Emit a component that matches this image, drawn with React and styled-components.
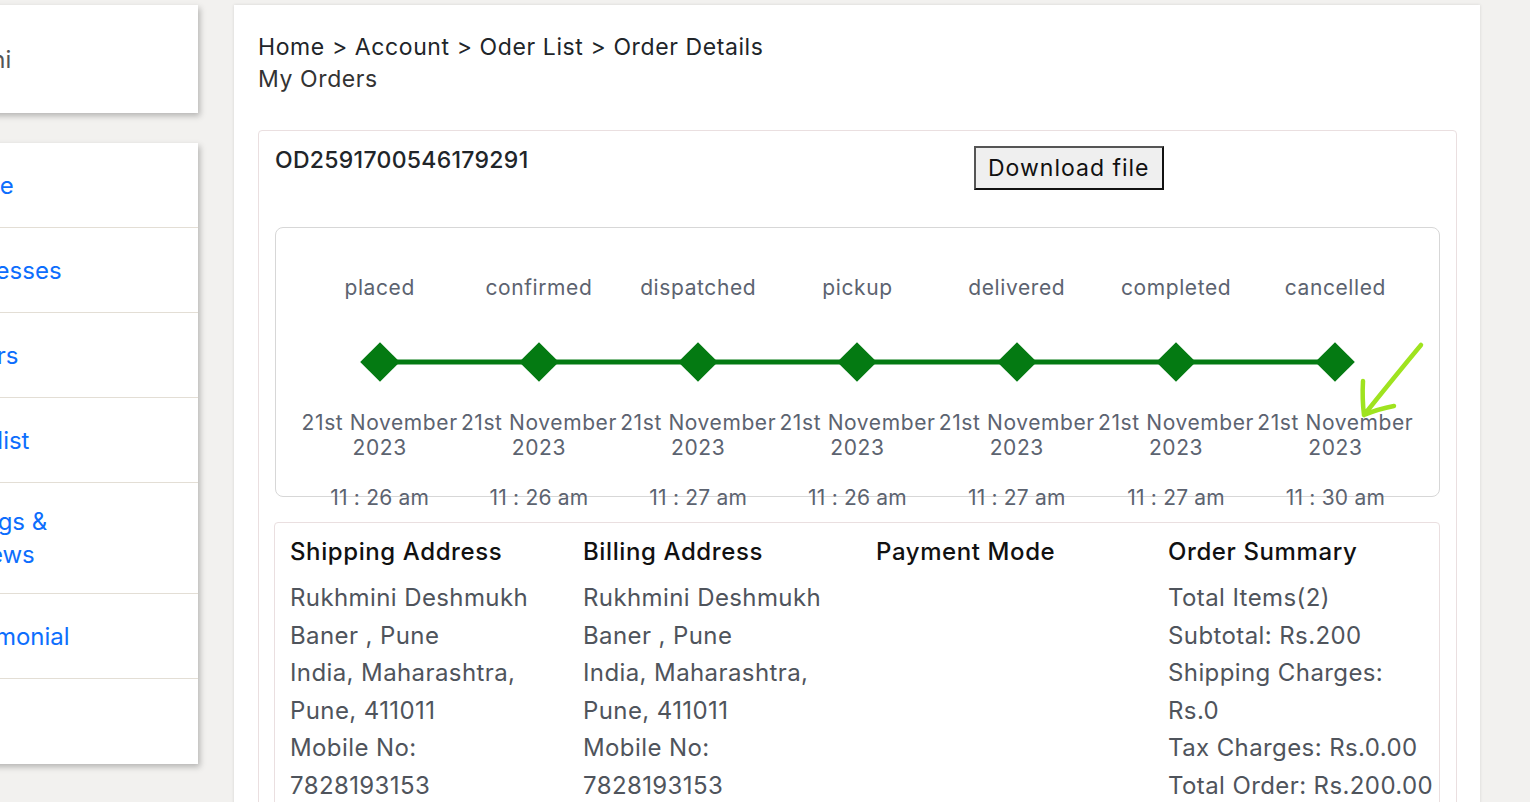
import React from "react";
import styled, { createGlobalStyle } from "styled-components";

const GlobalStyle = createGlobalStyle`
  html, body {
    margin: 0;
    padding: 0;
    overflow: hidden;
    background: #f2f1ef;
  }
  body {
    font-family: "Inter", "Open Sans", sans-serif;
    color: #212529;
  }
  * { box-sizing: border-box; }
`;

const Page = styled.div`
  display: flex;
  align-items: flex-start;
  gap: 36px;
  padding-top: 5px;
  height: 802px;
`;

const Sidebar = styled.aside`
  flex: 0 0 337px;
  margin-left: -139px;
  display: flex;
  flex-direction: column;
  gap: 30px;
`;

const SideCard = styled.div`
  background: #fff;
  box-shadow: 2px 3px 6px rgba(0, 0, 0, 0.25);
`;

const Greeting = styled.div`
  height: 108px;
  display: flex;
  align-items: center;
  padding: 0 16px;
  font-size: 24px;
  color: #555;
`;

const NavItem = styled.a`
  display: flex;
  align-items: center;
  min-height: 85px;
  padding: 22px 100px 22px 80px;
  line-height: 33px;
  font-size: 24px;
  color: #0d6efd;
  text-decoration: none;
  border-bottom: 1px solid #e3ded5;
  &:last-child { border-bottom: 0; }
`;

const Main = styled.main`
  flex: 0 0 1246px;
  min-height: 797px;
  background: #fff;
  padding: 26px 23px 0 24px;
  box-shadow: 0 0 3px rgba(0, 0, 0, 0.12);
`;

const Crumbs = styled.div`
  font-size: 23px;
  letter-spacing: 0.6px;
  line-height: 32px;
  color: #212529;
`;

const Title = styled.div`
  font-size: 23px;
  letter-spacing: 0.6px;
  line-height: 32px;
  color: #333;
`;

const OrderBox = styled.section`
  margin-top: 35px;
  border: 1px solid #eadfe0;
  border-radius: 4px;
  padding: 0 16px;
  height: 700px;
`;

const OrderHead = styled.div`
  display: grid;
  grid-template-columns: 60% 40%;
  padding-top: 14px;
  align-items: start;
`;

const OrderId = styled.div`
  font-size: 23px;
  letter-spacing: 0.3px;
  font-weight: 500;
  line-height: 30px;
  color: #212529;
`;

const DownloadButton = styled.button`
  justify-self: start;
  height: 44px;
  margin-top: 1px;
  padding: 0 12px;
  font-family: inherit;
  font-size: 23px;
  letter-spacing: 1px;
  color: #111;
  background: #efefef;
  border: 2px solid;
  border-color: #555 #111 #111 #555;
`;

const Track = styled.div`
  position: relative;
  margin-top: 37px;
  height: 270px;
  border: 1px solid #d7d7d7;
  border-radius: 8px;
  padding: 48px 24px 0;
  display: grid;
  grid-template-columns: repeat(7, 1fr);
`;

const Step = styled.div`
  display: flex;
  flex-direction: column;
  align-items: center;
  color: #5c6370;
  font-size: 21px;
  letter-spacing: 0.6px;
  text-align: center;
`;

const StepLabel = styled.div`
  line-height: 24px;
`;

const Marker = styled.div`
  position: relative;
  width: 100%;
  height: 40px;
  margin-top: 42px;
  display: flex;
  justify-content: center;
  align-items: center;

  &::before {
    content: "";
    position: absolute;
    top: 50%;
    height: 5px;
    transform: translateY(-50%);
    left: ${(p) => (p.$first ? "50%" : "0")};
    right: ${(p) => (p.$last ? "50%" : "0")};
    background: #047a12;
  }
`;

const Diamond = styled.span`
  position: relative;
  width: 28px;
  height: 28px;
  background: #047a12;
  transform: rotate(45deg);
`;

const StepDate = styled.div`
  margin-top: 28px;
  line-height: 25px;
  white-space: nowrap;
`;

const StepTime = styled.div`
  margin-top: 25px;
  line-height: 25px;
  letter-spacing: 0.2px;
`;

const Scribble = styled.svg`
  position: absolute;
  left: 1080px;
  top: 111px;
  width: 70px;
  height: 85px;
  overflow: visible;
`;

const InfoGrid = styled.div`
  margin-top: 25px;
  margin-left: -1px;
  border: 1px solid #eadfe0;
  border-radius: 4px;
  display: grid;
  grid-template-columns: 293px 293px 292px 1fr;
  padding-top: 13px;
  min-height: 300px;
`;

const InfoCol = styled.div`
  padding: 0 4px 0 15px;
`;

const InfoHead = styled.div`
  font-size: 24px;
  letter-spacing: 0.6px;
  font-weight: 500;
  line-height: 32px;
  color: #111;
  margin-bottom: 11px;
`;

const InfoLine = styled.div`
  font-size: 24px;
  letter-spacing: 0.4px;
  line-height: 37.5px;
  color: #4f545c;
`;

const steps = [
  { label: "placed", time: "11 : 26 am" },
  { label: "confirmed", time: "11 : 26 am" },
  { label: "dispatched", time: "11 : 27 am" },
  { label: "pickup", time: "11 : 26 am" },
  { label: "delivered", time: "11 : 27 am" },
  { label: "completed", time: "11 : 27 am" },
  { label: "cancelled", time: "11 : 30 am" },
];

const address = [
  "Rukhmini Deshmukh",
  "Baner , Pune",
  "India, Maharashtra,",
  "Pune, 411011",
  "Mobile No:",
  "7828193153",
];

const summary = [
  "Total Items(2)",
  "Subtotal: Rs.200",
  "Shipping Charges: Rs.0",
  "Tax Charges: Rs.0.00",
  "Total Order: Rs.200.00",
];

const menu = ["Profile", "Addresses", "Orders", "Wishlist", "Ratings & Reviews", "Testimonial", ""];

function App() {
  return (
    <>
      <GlobalStyle />
      <Page>
        <Sidebar>
          <SideCard>
            <Greeting>Hi Rukhmini</Greeting>
          </SideCard>
          <SideCard>
            {menu.map((m, i) => (
              <NavItem key={i} href="#">
                {m}
              </NavItem>
            ))}
          </SideCard>
        </Sidebar>

        <Main>
          <Crumbs>Home &gt; Account &gt; Oder List &gt; Order Details</Crumbs>
          <Title>My Orders</Title>

          <OrderBox>
            <OrderHead>
              <OrderId>OD2591700546179291</OrderId>
              <DownloadButton>Download file</DownloadButton>
            </OrderHead>

            <Track>
              {steps.map((s, i) => (
                <Step key={s.label}>
                  <StepLabel>{s.label}</StepLabel>
                  <Marker $first={i === 0} $last={i === steps.length - 1}>
                    <Diamond />
                  </Marker>
                  <StepDate>
                    21st November
                    <br />
                    2023
                  </StepDate>
                  <StepTime>{s.time}</StepTime>
                </Step>
              ))}
              <Scribble viewBox="0 0 70 85">
                <path
                  d="M65 6 Q40 36 8 76 M7 42 Q6 60 8 76 Q22 70 38 67"
                  fill="none"
                  stroke="#9fe31f"
                  strokeWidth="4.5"
                  strokeLinecap="round"
                  strokeLinejoin="round"
                />
              </Scribble>
            </Track>

            <InfoGrid>
              <InfoCol>
                <InfoHead>Shipping Address</InfoHead>
                {address.map((l) => (
                  <InfoLine key={l}>{l}</InfoLine>
                ))}
              </InfoCol>
              <InfoCol>
                <InfoHead>Billing Address</InfoHead>
                {address.map((l) => (
                  <InfoLine key={l}>{l}</InfoLine>
                ))}
              </InfoCol>
              <InfoCol>
                <InfoHead>Payment Mode</InfoHead>
              </InfoCol>
              <InfoCol>
                <InfoHead>Order Summary</InfoHead>
                {summary.map((l) => (
                  <InfoLine key={l}>{l}</InfoLine>
                ))}
              </InfoCol>
            </InfoGrid>
          </OrderBox>
        </Main>
      </Page>
    </>
  );
}

export default App;
